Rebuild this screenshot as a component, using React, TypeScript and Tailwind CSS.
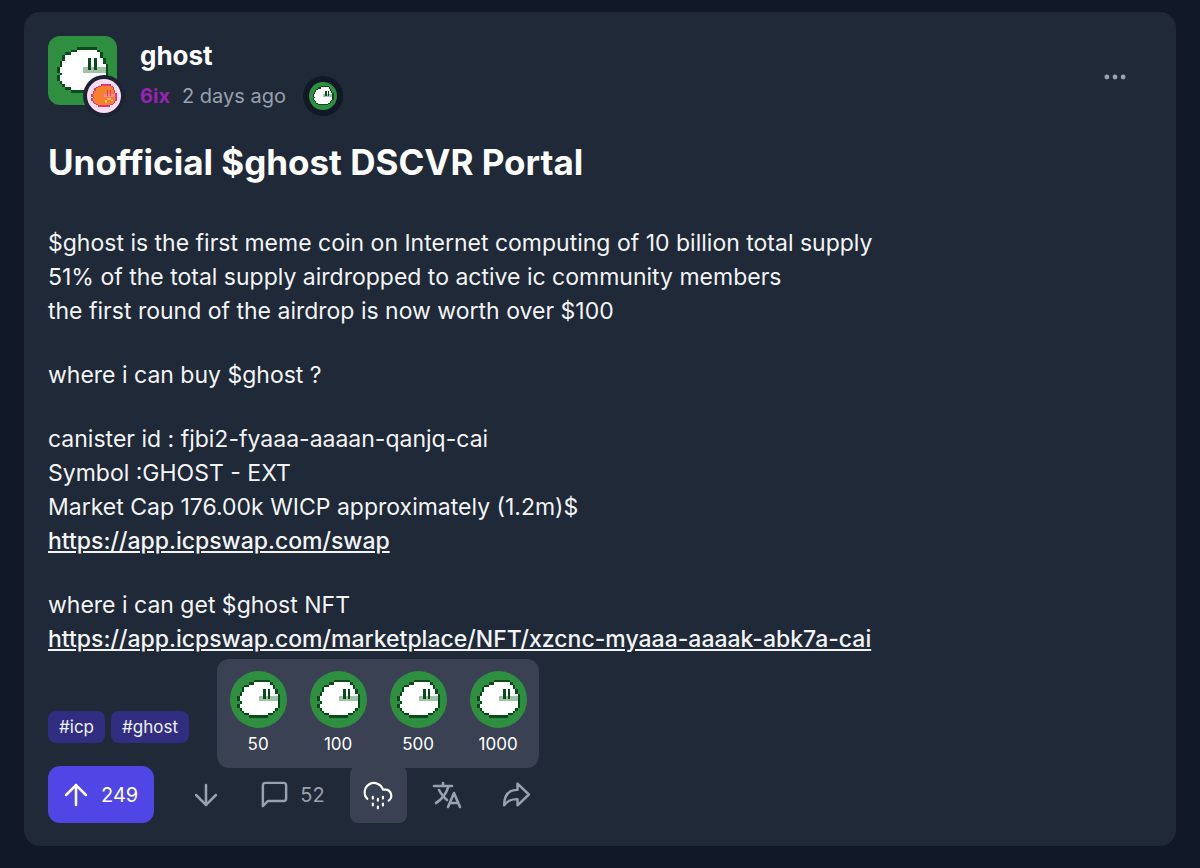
import React, { useState } from "react";
import { ArrowDown, ArrowUp } from "lucide-react";
import { IoArrowRedoOutline, IoEllipsisHorizontal, IoLanguageOutline } from "react-icons/io5";

// # outline, . body, o blush, m mouth
const GHOST = [
  "       #######    ",
  "     ##.......#   ",
  "   ##..........#  ",
  "  #............#  ",
  "  #........#.#..# ",
  " #.........#.#..# ",
  " #.........#.#...#",
  "#........oo#o#ooo#",
  "#........oooooooo#",
  " #...............#",
  "#..........mmm...#",
  "#.........m...m..#",
  " #........m.....# ",
  "  #............#  ",
  "   ##........##   ",
  "     ########     ",
];

const GREEN = { bg: "#2f8f41", "#": "#0b4a1a", ".": "#ffffff", o: "#a3c3a8", m: "#ffffff" };
const ORANGE = { bg: "#fbdcf3", "#": "#e0386a", ".": "#f5812f", o: "#f58a94", m: "#fbc05a" };

const PixelGhost = ({ colors = GREEN, className = "" }) => (
  <svg viewBox="0 0 24 24" className={className} aria-hidden="true" shapeRendering="crispEdges">
    <rect width="24" height="24" fill={colors.bg} />
    {GHOST.map((row, y) =>
      row.split("").map((cell, x) =>
        cell === " " ? null : (
          <rect key={`${x}-${y}`} x={x + 3} y={y + 3.7} width="1" height="1" fill={colors[cell]} />
        )
      )
    )}
  </svg>
);

const CommentIcon = () => (
  <svg width="31" height="31" viewBox="0 0 24 24" fill="none" stroke="currentColor" strokeWidth="1.9" strokeLinecap="round" strokeLinejoin="round">
    <path d="M21 15a2 2 0 0 1-2 2H7l-4 4V5a2 2 0 0 1 2-2h14a2 2 0 0 1 2 2z" />
  </svg>
);

const RainIcon = () => (
  <svg width="32" height="32" viewBox="0 0 24 24" fill="none" stroke="currentColor" strokeWidth="1.6" strokeLinecap="round" strokeLinejoin="round">
    <path d="M4 14.9A7 7 0 1 1 15.7 8h1.8a4.5 4.5 0 0 1 2.5 8.2" />
    <path d="M8.1 13.3v1.4M8.1 18.5v1.4M15.7 13.3v1.4M15.7 18.5v1.4M11.9 14.9v1.4M11.9 20.6v1.4" />
  </svg>
);

const airdrops = [50, 100, 500, 1000];
const tags = ["icp", "ghost"];

const PostHeader = () => (
  <div className="flex items-start">
    <div className="relative shrink-0">
      <PixelGhost className="w-[69px] h-[69px] rounded-xl" />
      <div className="absolute -right-2 -bottom-3 rounded-full bg-[#1a2233] p-1">
        <PixelGhost colors={ORANGE} className="w-[34px] h-[34px] rounded-full" />
      </div>
    </div>
    <div className="ml-[23px] flex-1">
      <h2 className="text-[26px] leading-10 font-bold text-white">ghost</h2>
      <div className="flex items-center text-[20px] leading-10">
        <a href="#6ix" className="font-bold text-[#9823b4]">6ix</a>
        <span className="ml-3 text-gray-400">2 days ago</span>
        <div className="ml-[17px] rounded-full bg-[#111827] p-[6px]">
          <PixelGhost className="w-7 h-7 rounded-full" />
        </div>
      </div>
    </div>
    <button aria-label="More options" className="mt-7 mr-6 text-gray-400 cursor-pointer">
      <IoEllipsisHorizontal size={26} />
    </button>
  </div>
);

const PostBody = () => (
  <div className="mt-[42px] flex flex-col gap-[30px] text-[23px] leading-[34px] text-gray-100">
    <p>
      $ghost is the first meme coin on Internet computing of 10 billion total supply
      <br />
      51% of the total supply airdropped to active ic community members
      <br />
      the first round of the airdrop is now worth over $100
    </p>
    <p>where i can buy $ghost ?</p>
    <p>
      canister id : fjbi2-fyaaa-aaaan-qanjq-cai
      <br />
      Symbol :GHOST - EXT
      <br />
      Market Cap 176.00k WICP approximately (1.2m)$
      <br />
      <a href="https://app.icpswap.com/swap" className="font-medium underline">
        https://app.icpswap.com/swap
      </a>
    </p>
    <p>
      where i can get $ghost NFT
      <br />
      <a href="https://app.icpswap.com/marketplace/NFT/xzcnc-myaaa-aaaak-abk7a-cai" className="font-medium underline">
        https://app.icpswap.com/marketplace/NFT/xzcnc-myaaa-aaaak-abk7a-cai
      </a>
    </p>
  </div>
);

const AirdropMenu = () => (
  <div className="absolute bottom-full left-1/2 -mb-[2px] flex -translate-x-1/2 gap-6 rounded-xl bg-[#394152] px-[13px] pt-3 pb-2">
    {airdrops.map((amount) => (
      <button key={amount} className="flex w-14 flex-col items-center text-[17px] leading-8 text-white cursor-pointer">
        <PixelGhost className="w-[57px] h-[57px] rounded-full" />
        {amount}
      </button>
    ))}
  </div>
);

const PostActions = () => {
  const [open, setOpen] = useState(true);

  return (
    <div className="mt-[23px] flex items-center gap-3 text-[20px] text-gray-400">
      <button aria-label="Upvote" className="flex h-[57px] items-center gap-2 rounded-xl bg-[#5046e5] pl-[11px] pr-4 text-white cursor-pointer">
        <ArrowUp size={34} strokeWidth={1.8} />
        249
      </button>
      <button aria-label="Downvote" className="ml-[11px] flex h-[57px] w-[57px] items-center justify-center cursor-pointer">
        <ArrowDown size={34} strokeWidth={1.8} />
      </button>
      <button aria-label="Comments" className="flex h-[57px] items-center gap-[10px] px-[13px] cursor-pointer">
        <CommentIcon />
        52
      </button>
      <div className="relative">
        <button
          aria-label="Airdrop"
          onClick={() => setOpen(!open)}
          className="flex h-[57px] w-[57px] items-center justify-center rounded-lg bg-[#394152] text-white cursor-pointer"
        >
          <RainIcon />
        </button>
        {open && <AirdropMenu />}
      </div>
      <button aria-label="Translate" className="flex h-[57px] w-[57px] items-center justify-center cursor-pointer">
        <IoLanguageOutline size={32} className="[&_path]:stroke-[42px]" />
      </button>
      <button aria-label="Share" className="flex h-[57px] w-[57px] items-center justify-center cursor-pointer">
        <IoArrowRedoOutline size={33} className="[&_path]:stroke-[38px]" />
      </button>
    </div>
  );
};

const App = () => (
  <main className="min-h-screen bg-[#111827] px-6 py-3 font-['Inter',sans-serif]">
    <article className="rounded-2xl bg-[#1f2937] px-6 pt-6 pb-[23px]">
      <PostHeader />
      <h1 className="mt-6 text-[35px] leading-[44px] font-bold text-white">Unofficial $ghost DSCVR Portal</h1>
      <PostBody />
      <div className="mt-[55px] flex gap-[6px]">
        {tags.map((tag) => (
          <a key={tag} href={`#${tag}`} className="rounded-lg bg-[#312e81] px-[11px] text-[17px] leading-8 text-indigo-50">
            #{tag}
          </a>
        ))}
      </div>
      <PostActions />
    </article>
  </main>
);

export default App;
